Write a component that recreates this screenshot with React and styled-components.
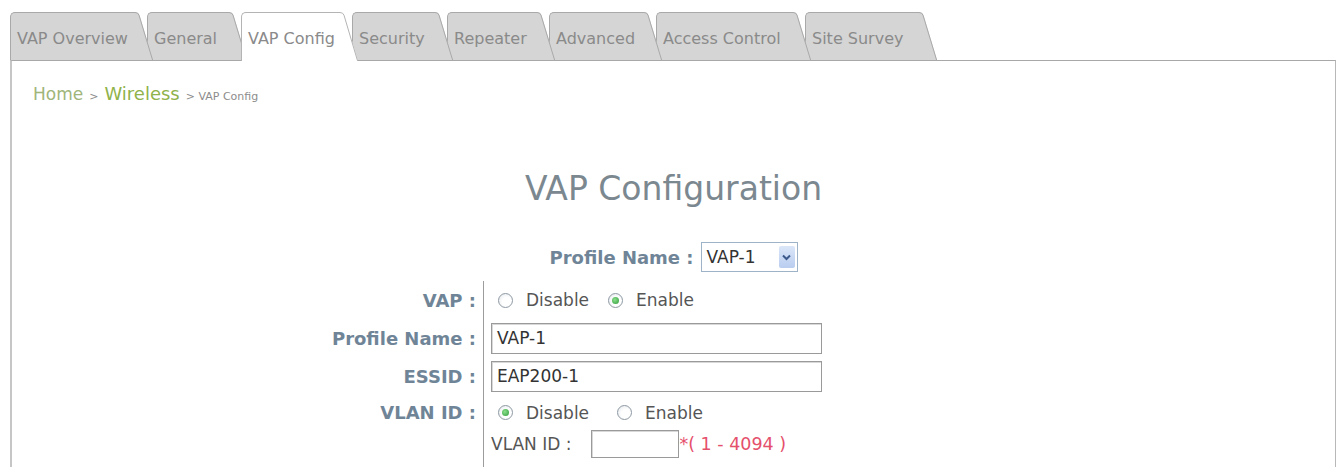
import React from "react";
import styled, { createGlobalStyle } from "styled-components";

const GlobalStyle = createGlobalStyle`
  html, body {
    margin: 0;
    padding: 0;
    background: #fff;
  }
  body {
    font-family: "DejaVu Sans", Verdana, sans-serif;
  }
`;

const Page = styled.div`
  width: 1337px;
  height: 467px;
  overflow: hidden;
  box-sizing: border-box;
  padding: 12px 1px 0 10px;
`;

const TabBar = styled.div`
  display: flex;
  align-items: flex-start;
  height: 48px;
`;

const Tab = styled.div`
  position: relative;
  z-index: ${(p) => p.$z};
  display: flex;
  flex-shrink: 0;
  height: ${(p) => (p.$active ? 49 : 48)}px;
  margin-right: -6px;
`;

const TabBody = styled.div`
  width: ${(p) => p.$w}px;
  height: 100%;
  box-sizing: border-box;
  display: flex;
  align-items: center;
  padding: 3px 0 0 6px;
  background: ${(p) => (p.$active ? "#fff" : "#d5d5d5")};
  border-top: 1px solid ${(p) => (p.$active ? "#b4b4b4" : "#a9a9a9")};
  border-left: 1px solid ${(p) => (p.$active ? "#b4b4b4" : "#a9a9a9")};
  border-top-left-radius: 5px;
  font-size: 16px;
  color: #8a8a8a;
  white-space: nowrap;
`;

const TabEdge = styled.svg`
  display: block;
  flex-shrink: 0;
`;

const Panel = styled.div`
  height: 420px;
  box-sizing: border-box;
  border-top: 1px solid #a8a8a8;
  border-left: 2px solid #c6c6c6;
  border-right: 1px solid #b8b8b8;
`;

const Crumbs = styled.div`
  margin-top: 23px;
  padding-left: 21px;
  height: 20px;
  line-height: 20px;
  display: flex;
  align-items: baseline;
  gap: 6px;
  white-space: nowrap;
`;

const CrumbLink = styled.span`
  font-size: ${(p) => p.$size}px;
  color: ${(p) => p.$color};
`;

const CrumbText = styled.span`
  font-size: 11px;
  color: #8c8c8c;
`;

const Title = styled.h1`
  margin: 65px 0 0;
  height: 40px;
  line-height: 40px;
  text-align: center;
  font-size: 33px;
  font-weight: normal;
  color: #7b8890;
`;

const ProfileRow = styled.div`
  margin-top: 33px;
  height: 30px;
  display: flex;
  justify-content: center;
  align-items: center;
  gap: 7px;
`;

const Label = styled.span`
  font-size: 18px;
  font-weight: bold;
  color: #6f8597;
  white-space: nowrap;
`;

const Select = styled.div`
  width: 97px;
  height: 30px;
  box-sizing: border-box;
  border: 1px solid #9fb3c8;
  display: flex;
  align-items: center;
  justify-content: space-between;
  padding: 0 2px 0 5px;
  font-size: 17px;
  color: #333;
`;

const SelectButton = styled.span`
  width: 16px;
  height: 22px;
  border-radius: 2px;
  background: linear-gradient(#dbe6f8, #b9cdf0);
  display: flex;
  align-items: center;
  justify-content: center;
`;

const FormTable = styled.div`
  margin-top: 9px;
  display: grid;
  grid-template-columns: 471px 1fr;
`;

const LabelCell = styled.div`
  height: ${(p) => p.$h}px;
  display: flex;
  align-items: center;
  justify-content: flex-end;
  padding-right: 7px;
`;

const ValueCell = styled.div`
  min-height: ${(p) => p.$h}px;
  border-left: 1px solid #9c9c9c;
  padding: 0 0 ${(p) => p.$pb || 0}px 7px;
  display: flex;
  flex-direction: column;
  justify-content: ${(p) => (p.$top ? "flex-start" : "center")};
`;

const Line = styled.div`
  height: ${(p) => p.$h}px;
  display: flex;
  align-items: center;
  gap: ${(p) => p.$gap || 0}px;
  font-size: 17px;
  color: #555;
  white-space: nowrap;
`;

const Option = styled.span`
  display: flex;
  align-items: center;
  gap: 13px;
`;

const Radio = styled.span`
  position: relative;
  width: 13px;
  height: 13px;
  margin-left: 7px;
  border-radius: 50%;
  border: 1px solid #8e99a4;
  background: radial-gradient(circle at 60% 60%, #fff 40%, #e1e4e8 100%);

  &::after {
    content: "";
    display: ${(p) => (p.$checked ? "block" : "none")};
    position: absolute;
    left: 3px;
    top: 3px;
    width: 7px;
    height: 7px;
    border-radius: 50%;
    background: radial-gradient(circle at 40% 40%, #8be08b, #2f9a3a);
  }
`;

const TextInput = styled.div`
  width: ${(p) => p.$w}px;
  height: ${(p) => p.$h}px;
  margin-left: ${(p) => p.$ml || 0}px;
  box-sizing: border-box;
  border: 1px solid #9a9a9a;
  box-shadow: inset 1px 1px 0 #d8d8d8;
  padding-left: 5px;
  display: flex;
  align-items: center;
  font-size: 17px;
  color: #333;
`;

const Hint = styled.span`
  font-size: 17.5px;
  color: #e5506c;
`;

const tabs = [
  { label: "VAP Overview", w: 123 },
  { label: "General", w: 80 },
  { label: "VAP Config", w: 97, active: true },
  { label: "Security", w: 81 },
  { label: "Repeater", w: 88 },
  { label: "Advanced", w: 93 },
  { label: "Access Control", w: 135 },
  { label: "Site Survey", w: 112 },
];

// slanted right end of a tab, drawn at fixed width so the angle never stretches
const TabShape = ({ active }) => {
  const h = active ? 49 : 48;
  const fill = active ? "#fff" : "#d5d5d5";
  const stroke = active ? "#b4b4b4" : "#a9a9a9";
  return (
    <TabEdge width="20" height={h} viewBox={`0 0 20 ${h}`}>
      <path d={`M0 0 H2 Q5.5 0 6.5 3 L20 ${h} H0 Z`} fill={fill} />
      <path d={`M0 0.5 H2 Q5 0.5 6 3.2 L19.6 ${h}`} fill="none" stroke={stroke} strokeWidth="1" />
    </TabEdge>
  );
};

const Chevron = () => (
  <svg width="9" height="7" viewBox="0 0 9 7">
    <polyline points="1,1.5 4.5,5 8,1.5" fill="none" stroke="#3d5a8c" strokeWidth="2" />
  </svg>
);

const RadioOption = ({ checked, children }) => (
  <Option>
    <Radio $checked={checked} />
    {children}
  </Option>
);

const App = () => (
  <Page>
    <GlobalStyle />
    <TabBar>
      {tabs.map((t, i) => (
        <Tab key={t.label} $active={t.active} $z={t.active ? 20 : 10 - i}>
          <TabBody $w={t.w} $active={t.active}>
            {t.label}
          </TabBody>
          <TabShape active={t.active} />
        </Tab>
      ))}
    </TabBar>
    <Panel>
      <Crumbs>
        <CrumbLink $size={17} $color="#a0b57a">Home</CrumbLink>
        <CrumbText>&gt;</CrumbText>
        <CrumbLink $size={18} $color="#8fb24a">Wireless</CrumbLink>
        <CrumbText>&gt; VAP Config</CrumbText>
      </Crumbs>

      <Title>VAP Configuration</Title>

      <ProfileRow>
        <Label>Profile Name :</Label>
        <Select>
          VAP-1
          <SelectButton>
            <Chevron />
          </SelectButton>
        </Select>
      </ProfileRow>

      <FormTable>
        <LabelCell $h={38}>
          <Label>VAP :</Label>
        </LabelCell>
        <ValueCell $h={38}>
          <Line $h={38} $gap={12}>
            <RadioOption>Disable</RadioOption>
            <RadioOption checked>Enable</RadioOption>
          </Line>
        </ValueCell>

        <LabelCell $h={38}>
          <Label>Profile Name :</Label>
        </LabelCell>
        <ValueCell $h={38}>
          <TextInput $w={331} $h={31}>VAP-1</TextInput>
        </ValueCell>

        <LabelCell $h={38}>
          <Label>ESSID :</Label>
        </LabelCell>
        <ValueCell $h={38}>
          <TextInput $w={331} $h={31}>EAP200-1</TextInput>
        </ValueCell>

        <LabelCell $h={35}>
          <Label>VLAN ID :</Label>
        </LabelCell>
        <ValueCell $h={35} $top $pb={30}>
          <Line $h={35} $gap={21}>
            <RadioOption checked>Disable</RadioOption>
            <RadioOption>Enable</RadioOption>
          </Line>
          <Line $h={28}>
            <span>VLAN ID :</span>
            <TextInput $w={88} $h={28} $ml={20} />
            <Hint>*( 1 - 4094 )</Hint>
          </Line>
        </ValueCell>
      </FormTable>
    </Panel>
  </Page>
);

export default App;
